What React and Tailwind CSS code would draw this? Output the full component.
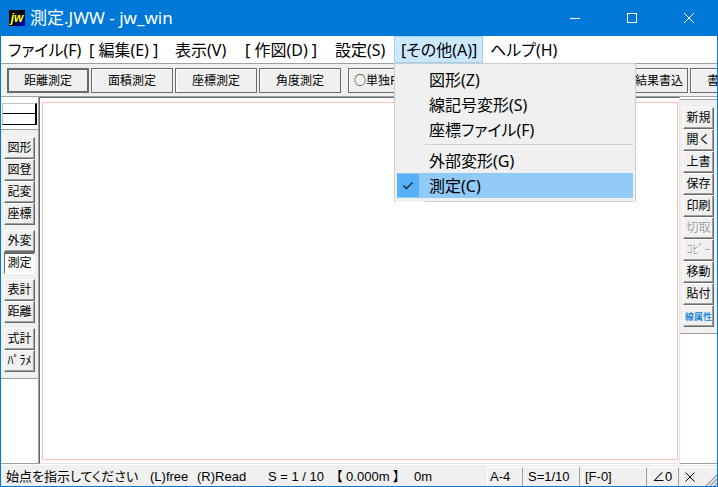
import { useState } from "react";
import clsx from "clsx";

const uiFont = "font-['Noto_Sans','Noto_Sans_CJK_JP',sans-serif]";
const toolFont = "font-['Liberation_Sans','Noto_Sans_CJK_JP',sans-serif]";

const otherMenu = [
  [{ label: "図形(Z)" }, { label: "線記号変形(S)" }, { label: "座標ファイル(F)" }],
  [{ label: "外部変形(G)" }, { label: "測定(C)", checked: true }],
];

const menus = [
  { label: "ファイル(F)", width: "w-[81px]" },
  { label: "[ 編集(E) ]", width: "w-[86px]" },
  { label: "表示(V)", width: "w-[70px]" },
  { label: "[ 作図(D) ]", width: "w-[90px]" },
  { label: "設定(S)", width: "w-[66px]" },
  { label: "[その他(A)]", width: "w-[89px]", groups: otherMenu },
  { label: "ヘルプ(H)", width: "w-[77px]" },
];

const measureModes = ["距離測定", "面積測定", "座標測定", "角度測定"];

const leftGroups = [
  ["図形", "図登", "記変", "座標"],
  ["外変", "測定"],
  ["表計", "距離"],
  ["式計", "ﾊﾟﾗﾒ"],
];

const rightTools = [
  { label: "新規" },
  { label: "開く" },
  { label: "上書" },
  { label: "保存" },
  { label: "印刷" },
  { label: "切取", disabled: true },
  { label: "ｺﾋﾟｰ", disabled: true },
  { label: "移動" },
  { label: "貼付" },
  { label: "線属性", accent: true },
];

function TitleBar() {
  return (
    <header className="flex h-9 shrink-0 items-center bg-[#0078d7] pl-2 text-white">
      <span className="flex h-4 w-4 items-center justify-center overflow-hidden bg-linear-to-br from-black from-45% to-[#0000f0] font-['Liberation_Sans',sans-serif] text-[12px] leading-4 font-bold text-[#ffff30] italic">
        jw
      </span>
      <h1 className="ml-[5px] flex-1 text-[17px] leading-6">測定.JWW - jw_win</h1>
      <button aria-label="最小化" className="flex h-9 w-[57px] items-center justify-center">
        <svg width="10" height="10" viewBox="0 0 10 10" stroke="currentColor" fill="none" shapeRendering="crispEdges">
          <path d="M0 5.5H10" />
        </svg>
      </button>
      <button aria-label="最大化" className="flex h-9 w-[57px] items-center justify-center">
        <svg width="10" height="10" viewBox="0 0 10 10" stroke="currentColor" fill="none" shapeRendering="crispEdges">
          <path d="M.5 .5H9.5V9.5H.5Z" />
        </svg>
      </button>
      <button aria-label="閉じる" className="flex h-9 w-[57px] items-center justify-center">
        <svg width="10" height="10" viewBox="0 0 10 10" stroke="currentColor" fill="none">
          <path d="M0 0L10 10M10 0L0 10" />
        </svg>
      </button>
    </header>
  );
}

function DropDown({ groups }) {
  return (
    <div
      role="menu"
      className="absolute top-full left-0 z-10 w-[242px] border-x border-t border-[#ccc] bg-[#f0f0f0] px-[2px] pt-[3px]"
    >
      {groups.map((group, i) => (
        <div key={i}>
          {group.map((item) => (
            <button
              key={item.label}
              role="menuitemcheckbox"
              aria-checked={!!item.checked}
              className={clsx(
                "flex h-[25px] w-full items-center text-left leading-[22px] whitespace-nowrap",
                item.checked ? "bg-[#91c9f7]" : "hover:bg-[#91c9f7]"
              )}
            >
              <span
                className={clsx(
                  "mr-[10px] flex h-[23px] w-[22px] items-center justify-center",
                  item.checked && "bg-[#56b0fa]"
                )}
              >
                {item.checked && (
                  <svg width="12" height="10" viewBox="0 0 12 10" fill="none" stroke="#222" strokeWidth="1.4">
                    <path d="M1.5 4.5L4.5 7.5L10.5 1.5" />
                  </svg>
                )}
              </span>
              {item.label}
            </button>
          ))}
          <div className={clsx("ml-7 border-t border-[#d0d0d0]", i < groups.length - 1 ? "mt-[2px] mb-[3px]" : "mt-[3px]")} />
        </div>
      ))}
    </div>
  );
}

function MenuBar() {
  const [open, setOpen] = useState("[その他(A)]");

  return (
    <nav className="flex h-[27px] shrink-0 bg-white text-[16px] leading-6 [font-feature-settings:'palt']">
      {menus.map((menu) => (
        <div key={menu.label} className={clsx("relative shrink-0", menu.width)}>
          <button
            onClick={() => setOpen(open === menu.label ? null : menu.label)}
            className={clsx(
              "flex h-full w-full items-center border pl-[6px] whitespace-nowrap",
              open === menu.label ? "border-[#99d1ff] bg-[#cce8ff]" : "border-transparent"
            )}
          >
            {menu.label}
          </button>
          {open === menu.label && menu.groups && <DropDown groups={menu.groups} />}
        </div>
      ))}
    </nav>
  );
}

function BarButton({ children, active, className = "w-[82px]" }) {
  return (
    <button
      className={clsx(
        "h-[25px] shrink-0 bg-[#f0f0f0] text-[12px] leading-4 whitespace-nowrap",
        active ? "border-2 border-[#696969]" : "border border-[#696969] shadow-[inset_1px_1px_0_#fff]",
        className
      )}
    >
      {children}
    </button>
  );
}

function ControlBar() {
  return (
    <div className="flex h-[34px] shrink-0 items-center border-t border-b border-[#a0a0a0] bg-[#f0f0f0] font-['Noto_Sans_CJK_JP',sans-serif]">
      <div className="flex gap-[2px] pl-[6px]">
        {measureModes.map((mode, i) => (
          <BarButton key={mode} active={i === 0}>
            {mode}
          </BarButton>
        ))}
      </div>
      <BarButton className="ml-[7px] w-16">○単独Fix</BarButton>
      <div className="ml-auto flex w-[111px] gap-[2px] overflow-hidden">
        <BarButton>測定結果書込</BarButton>
        <BarButton>書込設定</BarButton>
      </div>
    </div>
  );
}

function SideButton({ label, disabled, accent, pressed }) {
  return (
    <button
      disabled={disabled}
      className={clsx(
        "h-[22px] w-[31px] border text-center text-[12px] whitespace-nowrap",
        pressed
          ? "border-t-2 border-l-[#696969] border-t-[#696969] border-r-white border-b-white bg-[#fafafa] leading-[19px]"
          : "border-t-white border-l-white border-r-[#696969] border-b-[#696969] bg-[#f0f0f0] leading-5 shadow-[inset_-1px_-1px_0_#a0a0a0]",
        disabled && "text-[#a0a0a0] [text-shadow:1px_1px_0_#fff]",
        accent && "text-[#0078d7]"
      )}
    >
      <span className={clsx("-mx-1", accent && "text-[9px] font-medium")}>{label}</span>
    </button>
  );
}

function LeftPanel() {
  return (
    <aside className={clsx("flex w-[38px] shrink-0 flex-col border-r border-b border-[#a0a0a0] bg-white", toolFont)}>
      <div className="border-b border-[#a0a0a0] px-px pt-[6px] pb-1">
        <button
          aria-label="線属性"
          className="flex h-[22px] w-full items-center border border-t-[#c0c0c0] border-r-2 border-l-[#c0c0c0] border-r-black border-b-black"
        >
          <span className="mb-px h-px w-full bg-black" />
        </button>
      </div>
      <div className="flex flex-col gap-[5px] border-b border-[#a0a0a0] bg-[#f0f0f0] pt-[7px] pb-[6px] pl-[3px]">
        {leftGroups.map((group) => (
          <div key={group[0]} className="flex flex-col">
            {group.map((label) => (
              <SideButton key={label} label={label} pressed={label === "測定"} />
            ))}
          </div>
        ))}
      </div>
    </aside>
  );
}

function RightPanel() {
  return (
    <aside className={clsx("w-[37px] shrink-0 border-b border-[#a0a0a0] bg-white", toolFont)}>
      <div className="mt-[2px] flex flex-col border-t border-b border-[#a0a0a0] bg-[#f0f0f0] pt-[7px] pb-[6px] pl-[3px]">
        {rightTools.map((tool) => (
          <SideButton key={tool.label} {...tool} />
        ))}
      </div>
    </aside>
  );
}

function StatusCell({ children, className }) {
  return (
    <span className={clsx("h-[19px] border-t border-l border-r border-t-white border-l-white border-r-[#a0a0a0] pl-[2px]", className)}>
      {children}
    </span>
  );
}

function StatusBar() {
  return (
    <footer
      className={clsx(
        "flex h-[22px] shrink-0 items-end overflow-hidden border-t border-white bg-[#f0f0f0] text-[13px] leading-[18px] whitespace-nowrap",
        toolFont
      )}
    >
      <p className="flex flex-1 pl-[5px] [font-feature-settings:'palt']">
        <span className="w-36">始点を指示してください</span>
        <span className="w-[47px]">(L)free</span>
        <span className="w-[71px]">(R)Read</span>
        <span className="w-[68px]">S = 1 / 10</span>
        <span className="w-[78px]">【 0.000m 】</span>
        <span>0m</span>
      </p>
      <div className="flex gap-[2px]">
        <StatusCell className="w-9">A-4</StatusCell>
        <StatusCell className="w-[55px]">S=1/10</StatusCell>
        <StatusCell className="w-[65px]">[F-0]</StatusCell>
        <StatusCell className="w-[30px]">∠0</StatusCell>
        <span className="flex h-[19px] w-[36px] items-center justify-between border-t border-l border-white pl-[3px]">
          <svg width="10" height="10" viewBox="0 0 10 10" stroke="#000" fill="none">
            <path d="M.5 .5L9.5 9.5M9.5 .5L.5 9.5" />
          </svg>
          <svg width="12" height="12" viewBox="0 0 12 12" stroke="#a0a0a0" strokeWidth="1.5" className="self-end">
            <path d="M1 12L12 1M5 12L12 5M9 12L12 9" />
          </svg>
        </span>
      </div>
    </footer>
  );
}

function App() {
  return (
    <div className={clsx("flex min-h-screen flex-col border-x border-b border-[#0078d7] bg-[#f0f0f0] text-black", uiFont)}>
      <TitleBar />
      <MenuBar />
      <ControlBar />
      <main className="flex flex-1">
        <LeftPanel />
        <section className="flex flex-1 border border-t-[#696969] border-r-[#e3e3e3] border-b-[#e3e3e3] border-l-[#696969] bg-white pt-1 pr-px pb-[3px] pl-[2px]">
          <div className="flex-1 border border-[#ffc0b0]" />
        </section>
        <RightPanel />
      </main>
      <StatusBar />
    </div>
  );
}

export default App;
